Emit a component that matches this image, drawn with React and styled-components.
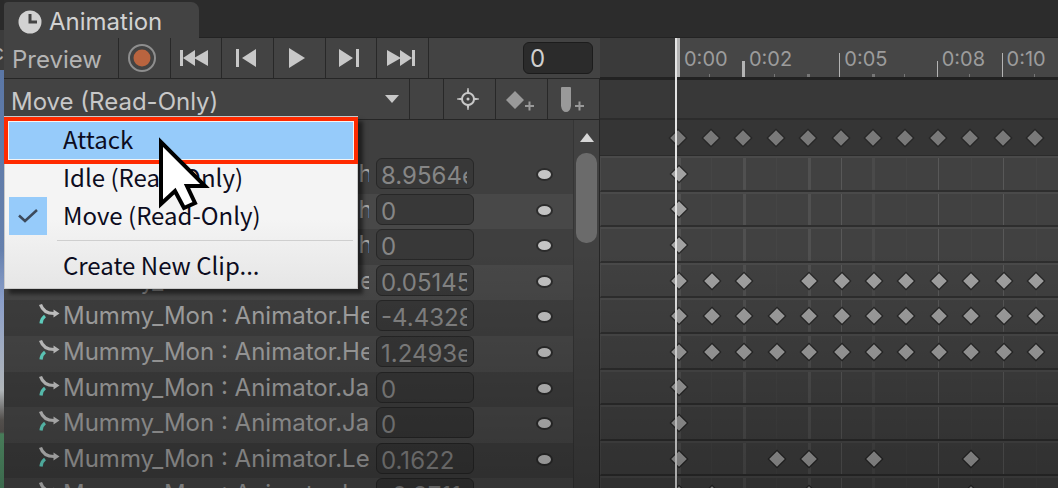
import React from "react";
import styled, { createGlobalStyle } from "styled-components";

const Global = createGlobalStyle`
  *, *::before, *::after { box-sizing: border-box; }
  body { margin: 0; background: #2c2c2c; font-family: Inter, "Liberation Sans", sans-serif; overflow: hidden; }
  button, input { font: inherit; }
`;

const Page = styled.div`
  display: flex;
  height: 100vh;
  overflow: hidden;
  position: relative;
`;

const SceneSliver = styled.div`
  display: flex;
  justify-content: flex-end;
  flex: none;
  width: 4px;
  padding-top: 38px;
  overflow: hidden;
  color: #b0b0b0;
  font-size: 22px;
  line-height: 28px;
  background: linear-gradient(#2a2a2a 0 30px, #3c3c3c 30px 70px, #5b77a6 70px, #6580ad 250px, #93a8d6 300px, #d2d8dc 390px, #66625e 420px, #5f5a57 432px, #5a9c70 434px, #52916a);
`;

const Fade = styled.div`
  position: absolute;
  inset: 0;
  pointer-events: none;
  background: linear-gradient(rgba(0, 0, 0, 0) 250px, rgba(0, 0, 0, 0.27) 488px);
`;

const Editor = styled.main`
  flex: 1;
  min-width: 0;
`;

const TabStrip = styled.header`
  height: 38px;
  padding-top: 2px;
  border-bottom: 1px solid #232323;
  background: #2c2c2c;
`;

const Tab = styled.h1`
  display: flex;
  align-items: center;
  gap: 7px;
  width: 195px;
  height: 36px;
  margin: 0;
  padding: 4px 0 0 14px;
  border-radius: 4px 8px 0 0;
  background: #434343;
  color: #d2d2d2;
  font-size: 24px;
  font-weight: 400;
  line-height: 28px;
`;

const Split = styled.div`
  display: flex;
  align-items: flex-start;
`;

const LeftPane = styled.section`
  flex: none;
  width: 596px;
  background: #434343;
`;

const Bar = styled.div`
  display: flex;
  align-items: stretch;
  height: 41px;
  border-bottom: 1px solid #262626;
`;

const Transport = styled.div`
  display: grid;
  grid-template-columns: repeat(6, minmax(0, 1fr));
  width: 310px;
`;

const ToolButton = styled.button`
  display: flex;
  align-items: center;
  justify-content: center;
  padding: 0 4px 0 0;
  border: 0;
  border-right: 1px solid #282828;
  background: transparent;
  color: #c8c8c8;
`;

const WideToolButton = styled(ToolButton)`
  width: 52px;
`;

const PreviewButton = styled(ToolButton)`
  justify-content: flex-start;
  width: 115px;
  padding: 3px 0 0 8px;
  color: #b4b4b4;
  font-size: 24px;
`;

const FrameInput = styled.input`
  width: 70px;
  height: 32px;
  margin: 4px 7px 4px auto;
  padding: 0 6px;
  border: 1px solid #1c1c1c;
  border-radius: 6px;
  background: #2b2b2b;
  color: #d0d0d0;
  font-size: 24px;
`;

const ClipButton = styled.button`
  display: flex;
  flex: 1;
  align-items: center;
  justify-content: space-between;
  padding: 4px 9px 0 7px;
  border: 0;
  border-right: 1px solid #282828;
  background: transparent;
  color: #c8c8c8;
  font-size: 24px;
`;

const Spacer = styled.div`
  width: 34px;
  border-right: 1px solid #282828;
`;

const PropertyArea = styled.div`
  display: flex;
  background: #3f3f3f;
`;

const PropertyList = styled.div`
  flex: 1;
  min-width: 0;
  padding-top: 38px;
`;

const Rows = styled.div`
  display: grid;
  grid-template-rows: repeat(10, 1fr);
  height: 356px;
`;

const PropertyRow = styled.label`
  display: grid;
  grid-template-columns: 24px 312px 98px 1fr;
  align-items: start;
  column-gap: 1px;
  padding-left: 34px;
  background: ${(p) => (p.$alt ? "#484848" : "#3f3f3f")};

  svg {
    margin-top: 3px;
  }
`;

const PropertyName = styled.span`
  margin-right: 6px;
  overflow: hidden;
  color: #a6a6a6;
  font-size: 24px;
  line-height: 32px;
  white-space: nowrap;
`;

const ValueInput = styled.input`
  width: 98px;
  height: 31px;
  padding: 4px 6px 0 4px;
  border: 1px solid #272727;
  border-radius: 6px;
  background: #383838;
  color: #868686;
  font-size: 24px;
`;

const CurveDot = styled.i`
  width: 17px;
  height: 13px;
  margin: 10px 0 0 61px;
  border: 2px solid #2c2c2c;
  border-radius: 50%;
  background: #c4c4c4;
`;

const ScrollTrack = styled.div`
  display: flex;
  flex-direction: column;
  align-items: center;
  gap: 11px;
  width: 27px;
  padding-top: 13px;
  border-left: 1px solid #353535;
  border-right: 1px solid #262626;
  background: #414141;
`;

const ScrollThumb = styled.div`
  width: 21px;
  height: 90px;
  border-radius: 10px;
  background: #6b6b6b;
`;

const Timeline = styled.section`
  flex: 1;
  min-width: 0;
  overflow: hidden;
  position: relative;
  background: #383838;
`;

const Track = styled.div`
  display: grid;
  grid-template-columns: repeat(13, minmax(0, 1fr));
  width: 422px;
  height: 100%;
  margin-left: 62px;
`;

const Ruler = styled.div`
  height: 42px;
  border-bottom: 3px solid #222;
  background: linear-gradient(90deg, #3a3a3a 77px, #464646 77px);
`;

const RulerCell = styled.div`
  display: flex;
  align-items: flex-end;
  padding-left: 15px;
  color: #9c9c9c;
  font-size: 20px;
  line-height: 22px;
  white-space: nowrap;
`;

const Tick = styled.i`
  flex: none;
  width: ${(p) => p.$w}px;
  height: ${(p) => p.$h}px;
  background: ${(p) => (p.$h > 4 ? "#b4b4b4" : "#777")};
`;

const TickLabel = styled.span`
  margin: 0 0 7px 4px;
`;

const EventLane = styled.div`
  height: 40px;
  border-bottom: 2px solid #2c2c2c;
  background: #383838;
`;

const SummaryLane = styled.div`
  height: 36px;
  border-bottom: 1px solid #2b2b2b;
  background: #353535;
`;

const Lane = styled.div`
  border: 1px solid #4a4a4a;
  border-right: 0;
  border-top-width: 2px;
  border-bottom: 2px solid #2e2e2e;
  background: #414141;
`;

const Cell = styled.div`
  display: flex;
  align-items: center;
  justify-content: center;
  background: ${(p) => (p.$line ? `linear-gradient(${p.$line}, ${p.$line}) center / ${p.$lw}px 100% no-repeat` : "none")};
`;

const Playhead = styled.div`
  position: absolute;
  top: 0;
  bottom: 0;
  left: 75px;
  width: 2px;
  background: #e4e4e4;
`;

const Popup = styled.div`
  position: absolute;
  top: 116px;
  left: 4px;
  width: 354px;
  height: 173px;
  padding: 4px;
  border: 1px solid #c9c9c9;
  background: linear-gradient(#f4f4f4 60%, #e6e6e6);
  box-shadow: 5px 5px 4px rgba(0, 0, 0, 0.5);
`;

const MenuItem = styled.button`
  display: flex;
  align-items: flex-start;
  width: 100%;
  height: 38px;
  padding: 0;
  border: 0;
  background: ${(p) => (p.$active ? "#96cbfa" : "transparent")};
  color: #0c0c20;
  font-family: "Noto Sans CJK KR", "Open Sans", sans-serif;
  font-size: 24px;
  line-height: 36px;
  text-align: left;
`;

const CheckSlot = styled.span`
  display: flex;
  align-items: center;
  justify-content: center;
  width: 38px;
  height: 38px;
  margin-right: 16px;
  background: ${(p) => (p.$on ? "#96cbfa" : "transparent")};
`;

const Divider = styled.hr`
  height: 1px;
  margin: 5px 0 6px 48px;
  border: 0;
  background: #cfcfcf;
`;

const Highlight = styled.div`
  position: absolute;
  top: 117px;
  left: 4px;
  width: 354px;
  height: 47px;
  border: 4px solid #ff2a00;
  box-shadow: inset 0 0 0 1px #f4f4f4;
  pointer-events: none;
`;

const Pointer = styled.svg`
  position: absolute;
  top: 134px;
  left: 156px;
  pointer-events: none;
`;

const Icon = ({ w = 32, h = 24, children }) => (
  <svg width={w} height={h} viewBox={`0 0 ${w} ${h}`} fill="currentColor" aria-hidden="true">{children}</svg>
);

const Diamond = ({ dim }) => (
  <svg width="22" height="22" viewBox="0 0 22 22" aria-hidden="true">
    <path d="M11 1.500 20.500 11 11 20.500 1.500 11Z" fill="#262626" />
    <path d="M11 3.200 18.800 11 11 18.800 3.200 11Z" fill={dim ? "#797979" : "#a2a2a2"} />
  </svg>
);

const CurveIcon = () => (
  <svg width="22" height="22" viewBox="0 0 22 22" fill="none" aria-hidden="true">
    <path d="M3 20.500Q3.500 15.500 7 13" stroke="#66dccb" strokeWidth="3.200" />
    <path d="M2.500 1.500Q5.500 10.500 16 10.500" stroke="#cacaca" strokeWidth="3.200" />
    <path d="M15.500 6.500 21.500 10.500 15.500 14.500Z" fill="#cacaca" />
  </svg>
);

const all = [0, 1, 2, 3, 4, 5, 6, 7, 8, 9, 10, 11, 12];
const properties = [
  { name: "Mummy_Mon : Animator.Chest", value: "8.9564e-07", keys: [0] },
  { name: "Mummy_Mon : Animator.Chest", value: "0", keys: [0] },
  { name: "Mummy_Mon : Animator.Chest", value: "0", keys: [0] },
  { name: "Mummy_Mon : Animator.Head", value: "0.05145", keys: all.filter((k) => k !== 3) },
  { name: "Mummy_Mon : Animator.Head", value: "-4.4328", keys: all },
  { name: "Mummy_Mon : Animator.Head", value: "1.2493e-06", keys: all },
  { name: "Mummy_Mon : Animator.Jaw", value: "0", keys: [0] },
  { name: "Mummy_Mon : Animator.Jaw", value: "0", keys: [0] },
  { name: "Mummy_Mon : Animator.Left", value: "0.1622", keys: [0, 3, 4, 6, 9] },
  { name: "Mummy_Mon : Animator.Left", value: "-0.3711", keys: [0, 1, 4, 9] },
];
const ticks = [
  { w: 3, h: 39, label: "0:00" }, { w: 1, h: 3 }, { w: 3, h: 16, label: "0:02" }, { w: 1, h: 3 },
  { w: 3, h: 3 }, { w: 1, h: 24, label: "0:05" }, { w: 3, h: 3 }, { w: 1, h: 3 },
  { w: 1, h: 16, label: "0:08" }, { w: 1, h: 3 }, { w: 1, h: 24, label: "0:10" }, { w: 1, h: 3 }, { w: 1, h: 3 },
];
const lineOf = (k) => {
  if (k === 0 || k === 2 || k === 4) return { $line: "#505050", $lw: 3 };
  if (k === 5 || k === 8 || k === 10) return { $line: "#585858", $lw: 1 };
  if (k === 6) return { $line: "#4a4a4a", $lw: 3 };
  return { $line: "#454545", $lw: 1 };
};

const Keys = ({ keys, dim, grid }) => (
  <Track>
    {all.map((k) => (
      <Cell key={k} {...(grid ? lineOf(k) : {})}>{keys.includes(k) && <Diamond dim={dim} />}</Cell>
    ))}
  </Track>
);

export default function App() {
  return (
    <Page>
      <Global />
      <SceneSliver>c</SceneSliver>
      <Editor>
        <TabStrip>
          <Tab>
            <svg width="24" height="24" viewBox="0 0 24 24" aria-hidden="true">
              <circle cx="12" cy="12" r="11.500" fill="#d2d2d2" />
              <path d="M12 4v8h7" fill="none" stroke="#434343" strokeWidth="3" />
            </svg>
            Animation
          </Tab>
        </TabStrip>
        <Split>
          <LeftPane>
            <Bar>
              <PreviewButton>Preview</PreviewButton>
              <Transport>
                <ToolButton aria-label="Record">
                  <Icon w={30} h={30}>
                    <circle cx="15" cy="15" r="13" fill="none" stroke="#8e8e8e" strokeWidth="2" />
                    <circle cx="15" cy="15" r="8.500" fill="#b9643f" />
                  </Icon>
                </ToolButton>
                <ToolButton aria-label="First key">
                  <Icon w={30} h={20}><path d="M1 2h3v16H1zM16 2v16L4 10zM29 2v16L15 10z" /></Icon>
                </ToolButton>
                <ToolButton aria-label="Previous key">
                  <Icon w={22} h={20}><path d="M1 1h3v18H1zM21 1v18L7 10z" /></Icon>
                </ToolButton>
                <ToolButton aria-label="Play">
                  <Icon w={20} h={20}><path d="M2 0v20L18 10z" /></Icon>
                </ToolButton>
                <ToolButton aria-label="Next key">
                  <Icon w={22} h={20}><path d="M18 1h3v18h-3zM1 1v18L15 10z" /></Icon>
                </ToolButton>
                <ToolButton aria-label="Last key">
                  <Icon w={30} h={20}><path d="M26 2h3v16h-3zM14 2v16L26 10zM1 2v16L15 10z" /></Icon>
                </ToolButton>
              </Transport>
              <FrameInput aria-label="Frame" defaultValue="0" />
            </Bar>
            <Bar>
              <ClipButton>
                Move (Read-Only)
                <Icon w={16} h={14}><path d="M1 1h14L8 9z" /></Icon>
              </ClipButton>
              <Spacer />
              <WideToolButton aria-label="Filter by selection">
                <Icon w={22} h={22}>
                  <circle cx="11" cy="11" r="6" fill="none" stroke="currentColor" strokeWidth="2" />
                  <circle cx="11" cy="11" r="1.500" />
                  <path d="M10.500 0h1l1 6h-3zM10.500 22h1l1-6h-3zM0 10.500v1l6 1v-3zM22 10.500v1l-6 1v-3z" />
                </Icon>
              </WideToolButton>
              <WideToolButton aria-label="Add keyframe">
                <Icon w={30} h={26}><path d="M10 5l9 9-9 9-9-9zM20 19h9v2h-9zM23.500 15.500h2v9h-2z" fill="#999" /></Icon>
              </WideToolButton>
              <WideToolButton aria-label="Add event">
                <Icon w={26} h={28}><path d="M3 2h8q1 0 1 1v18q-1 6-5 6T2 21V3q0-1 1-1zM16 20h9v2h-9zM19.500 16.500h2v9h-2z" fill="#999" /></Icon>
              </WideToolButton>
            </Bar>
            <PropertyArea>
              <PropertyList>
                <Rows>
                  {properties.map((p, i) => (
                    <PropertyRow key={i} $alt={i % 2 === 1}>
                      <CurveIcon />
                      <PropertyName>{p.name}</PropertyName>
                      <ValueInput defaultValue={p.value} />
                      <CurveDot />
                    </PropertyRow>
                  ))}
                </Rows>
              </PropertyList>
              <ScrollTrack>
                <Icon w={16} h={9}><path d="M8 0l7 9H1z" fill="#d6d6d6" /></Icon>
                <ScrollThumb />
              </ScrollTrack>
            </PropertyArea>
          </LeftPane>
          <Timeline>
            <Ruler>
              <Track>
                {ticks.map((t, k) => (
                  <RulerCell key={k}>
                    <Tick $w={t.w} $h={t.h} />
                    {t.label && <TickLabel>{t.label}</TickLabel>}
                  </RulerCell>
                ))}
              </Track>
            </Ruler>
            <EventLane />
            <SummaryLane><Keys keys={all} dim /></SummaryLane>
            <Rows>
              {properties.map((p, i) => <Lane key={i}><Keys keys={p.keys} grid /></Lane>)}
            </Rows>
            <Playhead />
          </Timeline>
        </Split>
      </Editor>
      <Fade />
      <Popup role="menu">
        <MenuItem role="menuitem" $active><CheckSlot />Attack</MenuItem>
        <MenuItem role="menuitem"><CheckSlot />Idle (Read-Only)</MenuItem>
        <MenuItem role="menuitem">
          <CheckSlot $on>
            <svg width="22" height="18" viewBox="0 0 22 18" fill="none" aria-hidden="true">
              <path d="M2 8.500 8 14 20 3" stroke="#3c4a5c" strokeWidth="2.500" />
            </svg>
          </CheckSlot>
          Move (Read-Only)
        </MenuItem>
        <Divider />
        <MenuItem role="menuitem"><CheckSlot />Create New Clip...</MenuItem>
      </Popup>
      <Highlight />
      <Pointer width="60" height="80" viewBox="0 0 60 80" aria-hidden="true">
        <path d="M5 8 5 70 19 57 28 74 39 69 31 52 49 52Z" fill="#fff" stroke="#000" strokeWidth="4" />
      </Pointer>
    </Page>
  );
}
